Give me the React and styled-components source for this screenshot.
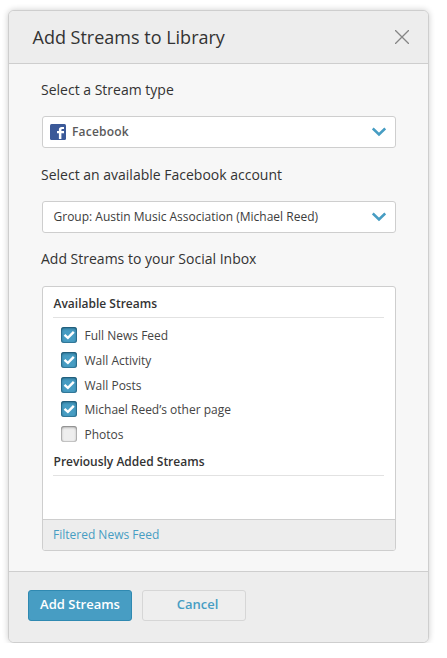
import React, { useState } from "react";
import styled, { createGlobalStyle } from "styled-components";

const GlobalStyle = createGlobalStyle`
  * { box-sizing: border-box; }
  body { margin: 0; background: #fff; font-family: "Open Sans", sans-serif; color: #333; }
  button { font-family: inherit; margin: 0; padding: 0; cursor: pointer; }
`;

const Modal = styled.section`
  width: 421px;
  height: 633px;
  margin: 10px 0 0 8px;
  display: flex;
  flex-direction: column;
  border: 1px solid #cecece;
  border-radius: 6px;
  background: #f7f7f7;
  box-shadow: 0 0 6px rgba(0, 0, 0, 0.2);
  overflow: hidden;
`;

const Header = styled.header`
  height: 53px;
  flex: none;
  display: flex;
  align-items: center;
  justify-content: space-between;
  padding: 0 19px 0 23.5px;
  background: #ededed;
  border-bottom: 1px solid #cecece;
`;

const Title = styled.h1`
  margin: 0;
  font-size: 18px;
  font-weight: 400;
  line-height: 52px;
`;

const CloseButton = styled.button`
  width: 14px;
  height: 14px;
  border: 0;
  background: none;
  svg { display: block; }
`;

const Body = styled.div`
  flex: 1;
  padding: 0 32px 0 33px;
`;

const Label = styled.div`
  height: ${(p) => p.$height}px;
  padding-top: ${(p) => p.$top}px;
  margin-left: -1px;
  font-size: 14px;
  line-height: 20px;
  white-space: nowrap;
`;

const Select = styled.button`
  width: 354px;
  height: 32px;
  display: flex;
  align-items: center;
  border: 1px solid #cecece;
  border-radius: 3px;
  background: #fff;
  padding: 0 9px ${(p) => p.$lift || 0}px ${(p) => p.$left}px;
  color: ${(p) => p.$color};
  font-size: 12px;
  letter-spacing: ${(p) => p.$spacing || 0}px;
  font-weight: ${(p) => p.$weight};
  text-align: left;
  svg { flex: none; }
`;

const SelectText = styled.span`
  flex: 1;
  white-space: nowrap;
`;

const Panel = styled.div`
  width: 354px;
  height: 265px;
  display: flex;
  flex-direction: column;
  border: 1px solid #cecece;
  border-radius: 3px;
  background: #fff;
  overflow: hidden;
`;

const PanelContent = styled.div`
  flex: 1;
  padding: 6px 11px 0 10px;
`;

const GroupTitle = styled.h2`
  margin: 0;
  height: 25px;
  padding-left: 0.5px;
  font-size: 12px;
  font-weight: 600;
  line-height: 22px;
  border-bottom: 1px solid #e2e2e2;
`;

const StreamList = styled.ul`
  list-style: none;
  margin: 0;
  padding: 5px 0 0 8px;
  height: 133px;
`;

const StreamRow = styled.li`
  height: 24.7px;
  display: flex;
  align-items: center;
  gap: 7.5px;
  font-size: 12px;
  color: #444;
  cursor: pointer;
`;

const StreamName = styled.span`
  padding-top: 1px;
`;

const Checkbox = styled.span`
  width: 16px;
  height: 16px;
  flex: none;
  display: block;
  border-radius: 3px;
  background: ${(p) => (p.$checked ? "#479dc3" : "#eeeeee")};
  box-shadow: ${(p) =>
    p.$checked
      ? "inset 0 0 0 1px rgba(22,75,100,.35), inset 0 1px 3px rgba(12,60,85,.8)"
      : "inset 0 0 0 1px rgba(0,0,0,.12), inset 0 1px 3px rgba(0,0,0,.45)"};
  svg { display: block; }
`;

const PanelFooter = styled.div`
  height: 31px;
  padding-left: 10px;
  border-top: 1px solid #cecece;
  background: #ededed;
  color: #479dc3;
  font-size: 12px;
  line-height: 30px;
`;

const Footer = styled.footer`
  height: 71px;
  flex: none;
  display: flex;
  gap: 10px;
  padding: 18px 0 0 19px;
  border-top: 1px solid #cecece;
  background: #ededed;
`;

const Button = styled.button`
  width: 104px;
  height: 31px;
  padding: 0 0 3px ${(p) => (p.$primary ? 0 : 7)}px;
  border: 1px solid ${(p) => (p.$primary ? "#2f89b1" : "#d6d6d6")};
  border-radius: 3px;
  background: ${(p) => (p.$primary ? "#479dc3" : "#eeeeee")};
  color: ${(p) => (p.$primary ? "#fff" : "#479dc3")};
  font-size: 13px;
  font-weight: 600;
  white-space: nowrap;
`;

const FacebookIcon = styled.svg`
  margin-right: 6px;
`;

const Chevron = () => (
  <svg width="14" height="10" viewBox="0 0 14 10" fill="none">
    <path d="M0.8 1.5 L7 7.5 L13.2 1.5" stroke="#479dc3" strokeWidth="2.6" />
  </svg>
);

const initialStreams = [
  { name: "Full News Feed", checked: true },
  { name: "Wall Activity", checked: true },
  { name: "Wall Posts", checked: true },
  { name: "Michael Reed’s other page", checked: true },
  { name: "Photos", checked: false },
];

export default function App() {
  const [streams, setStreams] = useState(initialStreams);
  const toggle = (name) =>
    setStreams((all) => all.map((s) => (s.name === name ? { ...s, checked: !s.checked } : s)));

  return (
    <>
      <GlobalStyle />
      <Modal>
        <Header>
          <Title>Add Streams to Library</Title>
          <CloseButton aria-label="Close">
            <svg width="14" height="14" viewBox="0 0 14 14">
              <path d="M0 0 L14 14 M14 0 L0 14" stroke="#858585" strokeWidth="1.3" />
            </svg>
          </CloseButton>
        </Header>
        <Body>
          <Label $height={52} $top={16}>Select a Stream type</Label>
          <Select $left={7} $lift={1} $weight={600} $spacing={0.2} $color="#5a5a5a">
            <FacebookIcon width="16" height="16" viewBox="0 0 16 16">
              <rect width="16" height="16" rx="1.5" fill="#3b5998" />
              <path
                d="M8.9 15V9.2H7V7.1h1.9V5.6C8.9 3.8 9.9 2.9 11.6 2.9H14V5h-1.4c-.9 0-1.2.3-1.2 1v1.1H14v2.1h-2.6V15z"
                fill="#fff"
              />
            </FacebookIcon>
            <SelectText>Facebook</SelectText>
            <Chevron />
          </Select>
          <Label $height={53} $top={17}>Select an available Facebook account</Label>
          <Select $left={10.5} $lift={1} $weight={400} $color="#3c3c3c">
            <SelectText>Group: Austin Music Association (Michael Reed)</SelectText>
            <Chevron />
          </Select>
          <Label $height={53} $top={16}>Add Streams to your Social Inbox</Label>
          <Panel>
            <PanelContent>
              <GroupTitle>Available Streams</GroupTitle>
              <StreamList>
                {streams.map((s) => (
                  <StreamRow key={s.name} onClick={() => toggle(s.name)}>
                    <Checkbox $checked={s.checked}>
                      {s.checked && (
                        <svg width="16" height="16" viewBox="0 0 16 16" fill="none">
                          <path d="M3.5 7.8 L6.9 10.9 L12.8 4.8" stroke="#fff" strokeWidth="2.4" />
                        </svg>
                      )}
                    </Checkbox>
                    <StreamName>{s.name}</StreamName>
                  </StreamRow>
                ))}
              </StreamList>
              <GroupTitle>Previously Added Streams</GroupTitle>
            </PanelContent>
            <PanelFooter>Filtered News Feed</PanelFooter>
          </Panel>
        </Body>
        <Footer>
          <Button $primary>Add Streams</Button>
          <Button>Cancel</Button>
        </Footer>
      </Modal>
    </>
  );
}
